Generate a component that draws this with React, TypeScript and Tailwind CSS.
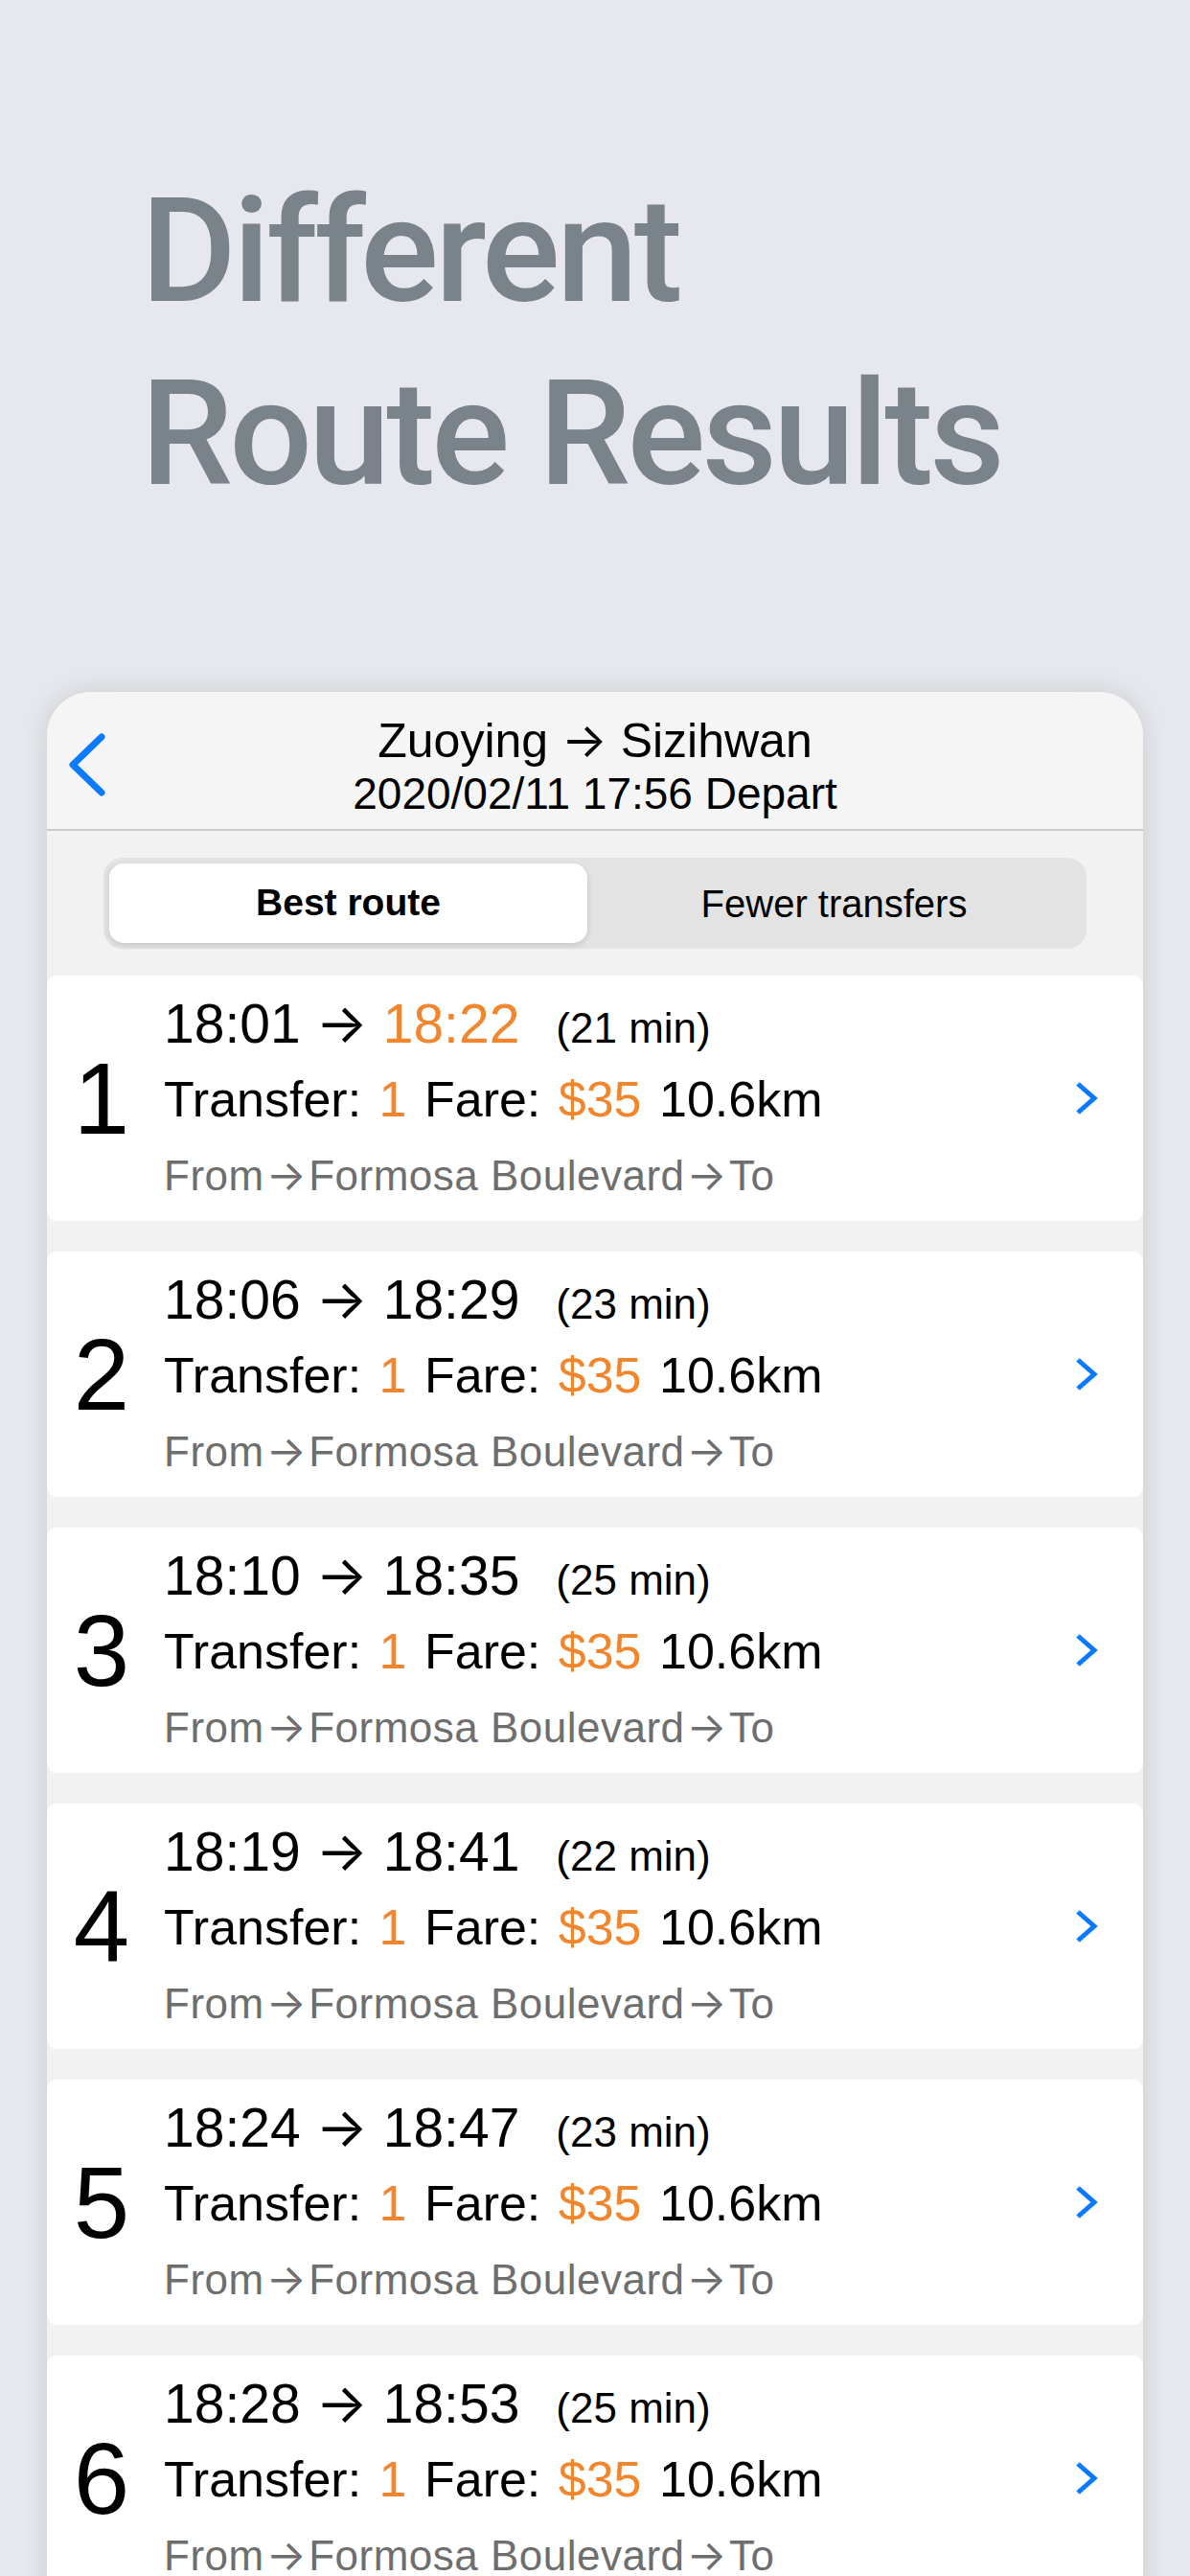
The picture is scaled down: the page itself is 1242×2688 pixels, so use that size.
const ROUTES = [
  { n: 1, dep: '18:01', arr: '18:22', mins: 21, fast: true },
  { n: 2, dep: '18:06', arr: '18:29', mins: 23 },
  { n: 3, dep: '18:10', arr: '18:35', mins: 25 },
  { n: 4, dep: '18:19', arr: '18:41', mins: 22 },
  { n: 5, dep: '18:24', arr: '18:47', mins: 23 },
  { n: 6, dep: '18:28', arr: '18:53', mins: 25 },
]

const sans = "font-['Liberation_Sans',Arial,sans-serif]"

// arrow glyph from Inter sits on the cap-height middle, like the iOS one
function Arrow({ tight }: { tight?: boolean }) {
  return <span className={`font-['Inter',sans-serif] ${tight ? 'mx-[2px]' : ''}`}>→</span>
}

function RouteRow({ route }: { route: (typeof ROUTES)[number] }) {
  return (
    <div className="flex h-[256px] items-center rounded-[10px] bg-white pl-[25px] pr-[46px]">
      <div className="w-[64px] text-center text-[105px] leading-none text-black">{route.n}</div>
      <div className="ml-[33px] flex flex-1 flex-col self-start pt-[11px]">
        <div className="h-[78px] text-[57px] leading-[78px] whitespace-nowrap text-black">
          {route.dep} <Arrow /> <span className={route.fast ? 'text-[#f0872f]' : ''}>{route.arr}</span>
          <span className="ml-[38px] text-[44px]">({route.mins} min)</span>
        </div>
        <div className="h-[80px] text-[52px] leading-[80px] whitespace-nowrap text-black [word-spacing:4px]">
          Transfer: <span className="text-[#f0872f]">1</span> Fare:{' '}
          <span className="text-[#f0872f]">$35</span> 10.6km
        </div>
        <div className="h-[78px] text-[44px] leading-[78px] tracking-[0.5px] whitespace-nowrap text-[#6e6e6e]">
          From<Arrow tight />Formosa Boulevard<Arrow tight />To
        </div>
      </div>
      <svg width="26" height="40" viewBox="0 0 26 40" className="shrink-0">
        <polyline points="4,5 21,20 4,35" fill="none" stroke="#0a7aff" strokeWidth="5" />
      </svg>
    </div>
  )
}

export default function App() {
  return (
    <div className={`h-[2688px] w-[1242px] overflow-hidden bg-[#e7e8ed] ${sans}`}>
      <h1 className="pt-[166px] pl-[147px] font-['Roboto',sans-serif] text-[153px] font-medium leading-[191px] tracking-[-4px] text-[#7a828a]">
        Different
        <br />
        Route Results
      </h1>

      <div className="mx-[49px] mt-[174px] overflow-hidden rounded-t-[46px] bg-[#f2f2f2] shadow-[0_0_26px_rgba(0,0,0,0.13)]">
        <div className="relative h-[145px] border-b-2 border-[#cbcbcb] bg-[#f5f5f5] pt-[22px] text-center text-black">
          <svg width="44" height="70" viewBox="0 0 44 70" className="absolute top-[42px] left-[22px]">
            <polyline
              points="35,5 5,34 35,63"
              fill="none"
              stroke="#0a7aff"
              strokeWidth="7"
              strokeLinecap="round"
              strokeLinejoin="round"
            />
          </svg>
          <div className="h-[56px] text-[50px] leading-[56px]">
            Zuoying <Arrow /> Sizihwan
          </div>
          <div className="h-[56px] text-[46px] leading-[56px]">2020/02/11 17:56 Depart</div>
        </div>

        <div className="px-[59px] pt-[28px] pb-[28px]">
          <div className="flex h-[95px] rounded-[20px] bg-[#e3e3e3] p-[6px]">
            <div className="flex w-[499px] items-center justify-center rounded-[15px] bg-white text-[39px] font-bold text-black shadow-[0_2px_6px_rgba(0,0,0,0.14)]">
              Best route
            </div>
            <div className="flex flex-1 items-center justify-center text-[40px] text-black">
              Fewer transfers
            </div>
          </div>
        </div>

        <div className="flex flex-col gap-[32px]">
          {ROUTES.map((r) => (
            <RouteRow key={r.n} route={r} />
          ))}
        </div>
      </div>
    </div>
  )
}
